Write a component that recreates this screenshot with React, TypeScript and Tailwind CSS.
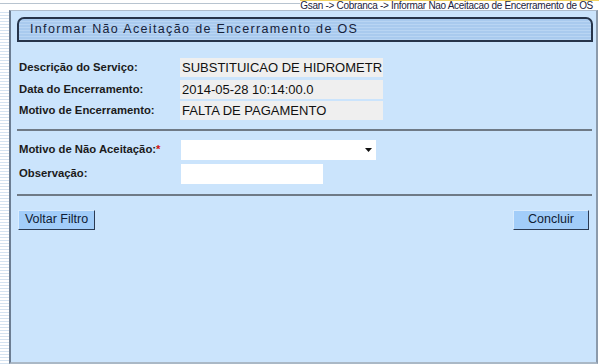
import React from "react";

const F = { fontFamily: '"Liberation Sans", Arial, sans-serif' } as React.CSSProperties;

function Row({ label, value }: { label: string; value: string }) {
  return (
    <div className="flex items-center h-[21.5px]">
      <div className="w-[161px] text-[11.3px] font-bold text-[#1b1b1b]">{label}</div>
      <div className="w-[203px] h-[19px] bg-[#efefef] pl-[2px] flex items-center text-[13px] text-[#111]">{value}</div>
    </div>
  );
}

export default function App() {
  return (
    <div style={F} className="w-[599px] h-[364px] bg-white overflow-hidden flex flex-col">
      {/* breadcrumb */}
      <div className="h-[10px] flex items-start relative">
        <div className="flex-1 h-[10px] relative">
          <div className="absolute left-0 right-0 top-[3px] h-px bg-[#b8c4d0]" />
        </div>
        <div className="text-[10px] leading-[9px] text-[#1c1c3c] pr-[6px] border-t border-[#f0d060] tracking-[-0.3px]">
          Gsan -&gt; Cobranca -&gt; Informar Nao Aceitacao de Encerramento de OS
        </div>
      </div>
      <div className="flex flex-1">
        {/* left dashed strip */}
        <div className="w-[9px] bg-[repeating-linear-gradient(to_bottom,#ffffff_0px,#ffffff_2px,#d5e3f1_2px,#d5e3f1_3px)]" />
        {/* panel */}
        <div className="w-[589px] h-[354px] bg-[#cbe4fc] border-l-2 border-l-[#6c7d92] border-t border-t-[#aebccc] border-r-2 border-r-[#8b9aab] border-b-2 border-b-[#aab8c6] flex flex-col pl-[6px] pr-[3px] pt-[6px]">
          <div className="h-[25px] rounded-tl-[7px] rounded-tr-[7px] border-2 border-[#26344a] bg-[repeating-linear-gradient(to_bottom,#a9caee_0px,#a9caee_2px,#b9d5f3_2px,#b9d5f3_3px)] flex items-center pl-[11px]">
            <span className="text-[12.5px] tracking-[1.35px] text-[#16223a]">
              Informar Não Aceitação de Encerramento de OS
            </span>
          </div>
          <div className="pl-[2px] pt-[15px] flex flex-col">
            <Row label="Descrição do Serviço:" value="SUBSTITUICAO DE HIDROMETR" />
            <Row label="Data do Encerramento:" value="2014-05-28 10:14:00.0" />
            <Row label="Motivo de Encerramento:" value="FALTA DE PAGAMENTO" />
          </div>
          <div className="mt-[7px] h-[2px] w-[575px] bg-[#6f7a86]" />
          <div className="pl-[2px] pt-[9px] flex flex-col gap-[4px]">
            <div className="flex items-center h-[20px]">
              <div className="w-[162px] text-[11.3px] font-bold text-[#1b1b1b]">
                Motivo de Não Aceitação:<span className="text-[#d01010]">*</span>
              </div>
              <div className="w-[195px] h-[20px] bg-white flex items-center justify-end pr-[4px]">
                <svg width="7" height="4" viewBox="0 0 7 4"><path d="M0 0H7L3.5 4Z" fill="#111" /></svg>
              </div>
            </div>
            <div className="flex items-center h-[20px]">
              <div className="w-[162px] text-[11.3px] font-bold text-[#1b1b1b]">Observação:</div>
              <div className="w-[142px] h-[20px] bg-white" />
            </div>
          </div>
          <div className="mt-[10px] h-[2px] w-[575px] bg-[#6f7a86]" />
          <div className="flex justify-between pt-[14px] pl-[1px] pr-[4px]">
            <button className="w-[77px] h-[20px] bg-[#a2cdf9] border border-t-[#d8ebfd] border-l-[#d8ebfd] border-r-[#2b3a52] border-b-[#2b3a52] text-[12.5px] text-[#101c34] leading-none">
              Voltar Filtro
            </button>
            <button className="w-[76px] h-[20px] bg-[#a2cdf9] border border-t-[#d8ebfd] border-l-[#d8ebfd] border-r-[#2b3a52] border-b-[#2b3a52] text-[12.5px] text-[#101c34] leading-none">
              Concluir
            </button>
          </div>
        </div>
      </div>
    </div>
  );
}
